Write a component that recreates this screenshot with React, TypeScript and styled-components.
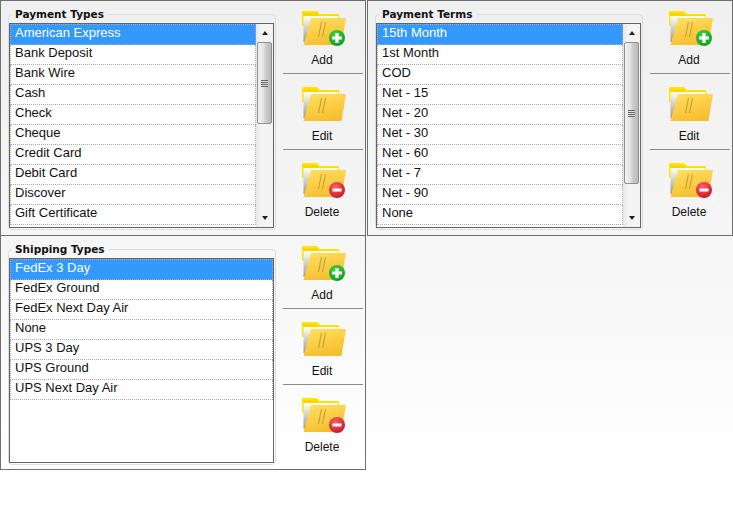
import * as React from "react";
import styled, { createGlobalStyle } from "styled-components";

const GlobalStyle = createGlobalStyle`
  html, body {
    margin: 0;
    padding: 0;
    background: #fff;
  }
  body {
    font-family: "Liberation Sans", Arial, sans-serif;
  }
`;

const Page = styled.div`
  width: 733px;
  height: 507px;
  display: grid;
  grid-template-columns: 367px 366px;
  grid-template-rows: 235px 235px;
  align-content: start;
  background: linear-gradient(180deg, #f0f0f0 0%, #f6f6f6 50%, #ffffff 92%);
  overflow: hidden;
`;

const Panel = styled.section<{ $last?: boolean }>`
  box-sizing: border-box;
  border: 1px solid #6e6e6e;
  display: flex;
  padding: 0 0 0 7px;
  width: 366px;
  height: ${(p) => (p.$last ? "235px" : "236px")};
`;

const Group = styled.fieldset`
  box-sizing: border-box;
  margin: 7px 0 0 0;
  padding: 2px 1px 0 0;
  flex: none;
  width: 268px;
  height: 222px;
  border: 1px solid #d5dfe5;
  border-radius: 4px;
  min-width: 0;
`;

const Legend = styled.legend`
  margin-left: 3px;
  padding: 0 4px 0 3px;
  height: 13px;
  font: bold 10.5px/13px "DejaVu Sans", Tahoma, sans-serif;
  color: #111;
`;

const ListBox = styled.div`
  box-sizing: border-box;
  height: 205px;
  border: 1px solid #646464;
  background: #fff;
  display: flex;
  overflow: hidden;
`;

const Rows = styled.ul`
  flex: 1;
  min-width: 0;
  margin: 0;
  padding: 0;
  list-style: none;
`;

const Row = styled.li<{ $selected?: boolean }>`
  box-sizing: border-box;
  height: 20px;
  padding-left: 4px;
  border: 1px dotted #aaa;
  border-top: 0;
  font-size: 13px;
  line-height: 16px;
  white-space: nowrap;
  color: ${(p) => (p.$selected ? "#fff" : "#111")};
  background: ${(p) => (p.$selected ? "#3399ff" : "transparent")};
  &:first-child {
    height: 21px;
    border-top: 1px dotted #aaa;
  }
`;

const ScrollBar = styled.div`
  width: 17px;
  flex: none;
  display: flex;
  flex-direction: column;
  align-items: center;
  background: linear-gradient(90deg, #e6e6e6, #f4f4f4 30%, #f4f4f4);
`;

const ArrowButton = styled.div`
  height: 18px;
  flex: none;
  width: 100%;
  display: flex;
  align-items: center;
  justify-content: center;
`;

const Arrow = styled.span<{ $down?: boolean }>`
  width: 0;
  height: 0;
  border-left: 3.5px solid transparent;
  border-right: 3.5px solid transparent;
  ${(p) => (p.$down ? "border-top: 4px solid #222;" : "border-bottom: 4px solid #222;")}
`;

const Track = styled.div`
  flex: 1;
  width: 100%;
  min-height: 0;
`;

const Thumb = styled.div`
  box-sizing: border-box;
  margin: 0 auto;
  width: 15px;
  border: 1px solid #8e8f8f;
  border-radius: 2px;
  background: linear-gradient(90deg, #f2f2f2, #e2e2e2 45%, #cfcfcf 55%, #b9b9b9);
  display: flex;
  align-items: center;
  justify-content: center;
`;

const Grip = styled.span`
  width: 7px;
  height: 7px;
  background: repeating-linear-gradient(180deg, #666 0 1px, #ddd 1px 2px);
`;

const Actions = styled.div`
  flex: none;
  width: 80px;
  margin: 0 0 0 7px;
  padding-top: 9px;
  display: flex;
  flex-direction: column;
`;

const ActionButton = styled.button`
  box-sizing: border-box;
  height: 76px;
  padding: 0 2px 0 0;
  border: 0;
  background: transparent;
  display: flex;
  flex-direction: column;
  align-items: center;
  font: 12px/14px "Liberation Sans", Arial, sans-serif;
  color: #111;
  &:first-child {
    height: 63px;
  }
  & + & {
    border-top: 1px solid #8a8a8a;
    padding-top: 12px;
  }
`;

const ActionLabel = styled.span`
  margin-top: 7px;
`;

const FolderSvg = styled.svg`
  display: block;
  flex: none;
  margin-left: 4px;
`;

type Kind = "add" | "edit" | "delete";

const Folder: React.FC<{ kind: Kind; id: string }> = ({ kind, id }) => (
  <FolderSvg width="44" height="36" viewBox="0 0 44 36">
    <defs>
      <linearGradient id={`${id}front`} x1="0.2" y1="0" x2="0.6" y2="1">
        <stop offset="0" stopColor="#ffdf5e" />
        <stop offset="1" stopColor="#f6bd2c" />
      </linearGradient>
      <linearGradient id={`${id}paper`} x1="0" y1="0" x2="0" y2="1">
        <stop offset="0" stopColor="#ffffff" />
        <stop offset="1" stopColor="#9a9a8c" />
      </linearGradient>
      <radialGradient id={`${id}plus`} cx="0.4" cy="0.3" r="0.8">
        <stop offset="0" stopColor="#3fd03f" />
        <stop offset="1" stopColor="#0c9a1a" />
      </radialGradient>
      <radialGradient id={`${id}minus`} cx="0.4" cy="0.3" r="0.8">
        <stop offset="0" stopColor="#f8606a" />
        <stop offset="1" stopColor="#c80c20" />
      </radialGradient>
    </defs>
    <path d="M0 35V1h15l3 3h19v12H0z" fill="#ffe600" />
    <path d="M1 3h14l2 2.5h19V8H1z" fill="#ffd400" />
    <path d="M1.5 6H36v26H1.5z" fill={`url(#${id}paper)`} />
    <path d="M9 8h35l-4.5 27H1.5z" fill={`url(#${id}front)`} />
    <path d="M16.5 27l3-15M20.5 27l3-15" stroke="#c8a23e" strokeWidth="1.2" fill="none" />
    {kind === "add" && (
      <g>
        <circle cx="35" cy="28" r="8" fill={`url(#${id}plus)`} />
        <path d="M35 23v10M30 28h10" stroke="#fff" strokeWidth="3.2" />
      </g>
    )}
    {kind === "delete" && (
      <g>
        <circle cx="35" cy="28" r="8" fill={`url(#${id}minus)`} />
        <path d="M30.5 28h9" stroke="#fff" strokeWidth="3" />
      </g>
    )}
  </FolderSvg>
);

type ListPanelProps = {
  name: string;
  title: string;
  items: string[];
  thumbHeight?: number;
  last?: boolean;
};

const ListPanel: React.FC<ListPanelProps> = ({ name, title, items, thumbHeight, last }) => (
  <Panel $last={last}>
    <Group>
      <Legend>{title}</Legend>
      <ListBox>
        <Rows>
          {items.map((item, i) => (
            <Row key={item} $selected={i === 0}>
              {item}
            </Row>
          ))}
        </Rows>
        {thumbHeight && (
          <ScrollBar>
            <ArrowButton>
              <Arrow />
            </ArrowButton>
            <Track>
              <Thumb style={{ height: thumbHeight }}>
                <Grip />
              </Thumb>
            </Track>
            <ArrowButton>
              <Arrow $down />
            </ArrowButton>
          </ScrollBar>
        )}
      </ListBox>
    </Group>
    <Actions>
      <ActionButton>
        <Folder kind="add" id={`${name}a`} />
        <ActionLabel>Add</ActionLabel>
      </ActionButton>
      <ActionButton>
        <Folder kind="edit" id={`${name}e`} />
        <ActionLabel>Edit</ActionLabel>
      </ActionButton>
      <ActionButton>
        <Folder kind="delete" id={`${name}d`} />
        <ActionLabel>Delete</ActionLabel>
      </ActionButton>
    </Actions>
  </Panel>
);

const paymentTypes = [
  "American Express",
  "Bank Deposit",
  "Bank Wire",
  "Cash",
  "Check",
  "Cheque",
  "Credit Card",
  "Debit Card",
  "Discover",
  "Gift Certificate",
];

const paymentTerms = [
  "15th Month",
  "1st Month",
  "COD",
  "Net - 15",
  "Net - 20",
  "Net - 30",
  "Net - 60",
  "Net - 7",
  "Net - 90",
  "None",
];

const shippingTypes = [
  "FedEx 3 Day",
  "FedEx Ground",
  "FedEx Next Day Air",
  "None",
  "UPS 3 Day",
  "UPS Ground",
  "UPS Next Day Air",
];

export default function App() {
  return (
    <Page>
      <GlobalStyle />
      <ListPanel name="types" title="Payment Types" items={paymentTypes} thumbHeight={82} />
      <ListPanel name="terms" title="Payment Terms" items={paymentTerms} thumbHeight={142} />
      <ListPanel name="ship" title="Shipping Types" items={shippingTypes} last />
    </Page>
  );
}
